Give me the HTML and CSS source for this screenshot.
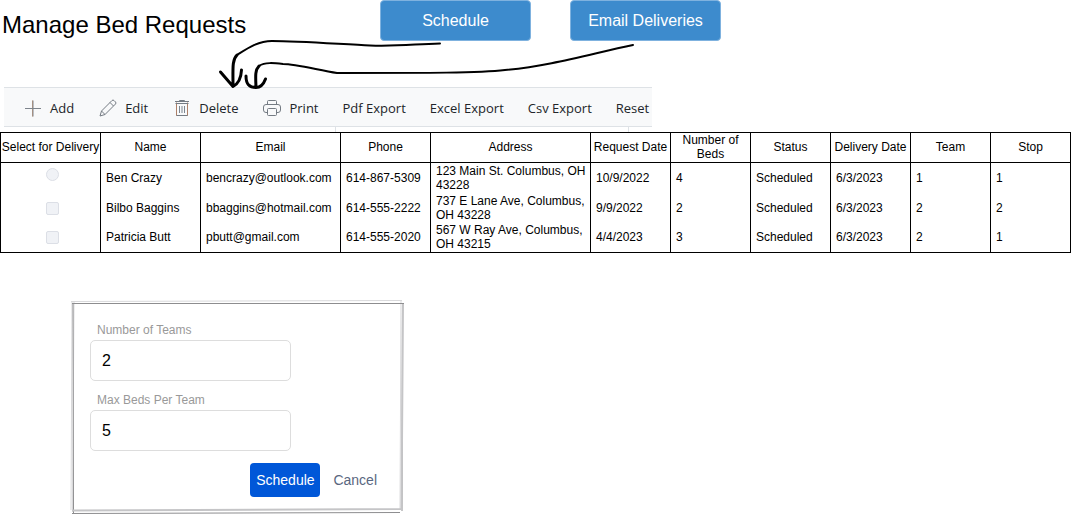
FILE: index.html
```html
<!DOCTYPE html>
<html lang="en">
<head>
<meta charset="utf-8">
<meta name="viewport" content="width=device-width, initial-scale=1">
<title>Manage Bed Requests</title>
<link rel="stylesheet" href="styles.css">
</head>
<body>
<header class="page-header">
  <h1 class="page-title">Manage Bed Requests</h1>
  <div class="header-actions">
    <button class="action-button" type="button">Schedule</button>
    <button class="action-button" type="button">Email Deliveries</button>
  </div>
  <svg class="arrows" width="660" height="92" viewBox="0 0 660 92" aria-hidden="true">
    <g fill="none" stroke="#000" stroke-linecap="round" stroke-linejoin="round">
      <path stroke-width="2" d="M440 43.500C415 44 400 46.500 370 45.500C345 44.500 300 41 272 41C258 41 248 48 237 55"/>
      <path stroke-width="3" d="M237 55C232 60 233 68 233 86M220.500 72L233 86.500C238 84 241 80 241.500 70"/>
      <path stroke-width="2" d="M633 45C590 54 550 66 505 70C480 73 430 73 337 73C318 70 296 64 283 64C274 63 265 62 259 66"/>
      <path stroke-width="3" d="M259 66C255 70 255.500 76 256 87M246 76C246 84 249 87.500 256 87.500C262 87.500 264 83 265.500 79"/>
    </g>
  </svg>
</header>

<div class="toolbar" role="toolbar" aria-label="Request tools">
  <button class="tool tool-with-icon" type="button">
    <svg class="tool-icon" viewBox="0 0 18 18" aria-hidden="true"><path stroke="#c99a78" d="M8.500 1.500V17.500"/><path stroke="#7d848c" d="M1 9.500H17M9 1.500V17.500"/></svg>Add</button>
  <button class="tool tool-with-icon" type="button">
    <svg class="tool-icon" viewBox="0 0 18 18" aria-hidden="true"><path stroke="#747b83" d="M1 17L2.500 12L13 1.500Q14 .5 15 1.500L16.500 3Q17.500 4 16.500 5L6 15.500ZM2.500 12L6 15.500M11 3.500L14.500 7"/></svg>Edit</button>
  <button class="tool tool-with-icon" type="button">
    <svg class="tool-icon" viewBox="0 0 18 18" aria-hidden="true"><path stroke="#ad8068" d="M3.500 3.500V16.500H14.500V3.500"/><path stroke="#747b83" d="M2 2.500H16M6.500 2.500V1.500H11.500V2.500M2.500 4.500H15.500M3.500 16.500H14.500"/><path stroke="#7c8690" d="M6.500 7V14M9 7V14M11.500 7V14"/></svg>Delete</button>
  <button class="tool" type="button">
    <svg class="tool-icon" viewBox="0 0 18 18" aria-hidden="true"><path stroke="#747b83" d="M4.500 5.500V2.500Q4.500 1.500 5.500 1.500H12.500Q13.500 1.500 13.500 2.500V5.500M4 13.500H3Q.5 13.500 .5 11V8Q.5 5.500 3 5.500H15Q17.500 5.500 17.500 8V11Q17.500 13.500 15 13.500H14M4.500 10.500Q4.500 9.500 5.500 9.500H12.500Q13.500 9.500 13.500 10.500V15.500Q13.500 16.500 12.500 16.500H5.500Q4.500 16.500 4.500 15.500Z"/></svg>Print</button>
  <button class="tool" type="button">Pdf Export</button>
  <button class="tool" type="button">Excel Export</button>
  <button class="tool" type="button">Csv Export</button>
  <button class="tool" type="button">Reset</button>
</div>
<div class="grid-edge"><span class="edge-cell"></span><span class="edge-cell edge-cell-next"></span></div>

<table class="requests">
  <colgroup>
    <col class="col-medium"><col class="col-medium"><col class="col-email"><col class="col-phone"><col class="col-address"><col class="col-small"><col class="col-small"><col class="col-small"><col class="col-small"><col class="col-small"><col class="col-small">
  </colgroup>
  <thead>
    <tr><th class="tight-head" scope="col">Select for Delivery</th><th scope="col">Name</th><th scope="col">Email</th><th scope="col">Phone</th><th scope="col">Address</th><th class="tight-head" scope="col">Request Date</th><th scope="col">Number of Beds</th><th scope="col">Status</th><th class="tight-head" scope="col">Delivery Date</th><th scope="col">Team</th><th scope="col">Stop</th></tr>
  </thead>
  <tbody>
    <tr><td class="select-cell"><input class="pick pick-round" type="radio" aria-label="Select Ben Crazy" disabled></td><td>Ben Crazy</td><td>bencrazy@outlook.com</td><td>614-867-5309</td><td class="address">123 Main St. Columbus, OH 43228</td><td>10/9/2022</td><td>4</td><td>Scheduled</td><td>6/3/2023</td><td>1</td><td>1</td></tr>
    <tr><td class="select-cell"><input class="pick" type="checkbox" aria-label="Select Bilbo Baggins" disabled></td><td>Bilbo Baggins</td><td>bbaggins@hotmail.com</td><td>614-555-2222</td><td class="address">737 E Lane Ave, Columbus, OH 43228</td><td>9/9/2022</td><td>2</td><td>Scheduled</td><td>6/3/2023</td><td>2</td><td>2</td></tr>
    <tr><td class="select-cell"><input class="pick" type="checkbox" aria-label="Select Patricia Butt" disabled></td><td>Patricia Butt</td><td>pbutt@gmail.com</td><td>614-555-2020</td><td class="address">567 W Ray Ave, Columbus, OH 43215</td><td>4/4/2023</td><td>3</td><td>Scheduled</td><td>6/3/2023</td><td>2</td><td>1</td></tr>
  </tbody>
</table>

<form class="dialog">
  <svg class="dialog-frame" viewBox="0 0 334 214" preserveAspectRatio="none" aria-hidden="true">
    <g fill="none">
      <path stroke="#d9d9db" stroke-width="1" d="M1 1.500L332 .5M2 2L1 210M4 2L2.500 212M331 0L330 210"/>
      <path stroke="#8d8d8f" stroke-width="1" d="M2 3.500H334M3 3L3.500 213M332.500 3L332 211M2 213.500L330 212.500"/>
      <path stroke="#c5c5c7" stroke-width="2" d="M2 210.500L331 209M333 4L331.500 210"/>
    </g>
  </svg>
  <label class="field-label" for="teams">Number of Teams</label>
  <input class="field" id="teams" type="text" value="2">
  <label class="field-label" for="beds">Max Beds Per Team</label>
  <input class="field" id="beds" type="text" value="5">
  <div class="dialog-actions">
    <button class="submit" type="button">Schedule</button>
    <button class="cancel" type="button">Cancel</button>
  </div>
</form>
</body>
</html>
```
FILE: styles.css
```css
* { box-sizing: border-box; }

body {
  margin: 0;
  background: #fff;
  color: #000;
  font-family: "Liberation Sans", Arial, sans-serif;
  font-size: 12px;
}

button, input { margin: 0; font-family: inherit; }

.page-header {
  position: relative;
  display: flex;
  align-items: flex-start;
  min-height: 87px;
}

.page-title {
  flex: 0 0 380px;
  margin: 0;
  padding: 10px 0 0 2px;
  font-size: 24px;
  font-weight: 400;
  line-height: 30px;
}

.header-actions { display: flex; gap: 39px; }

.action-button {
  width: 151px;
  height: 41px;
  padding: 0;
  border: 1px solid #7fb2df;
  border-radius: 4px;
  background: #3d8bcd;
  color: #fff;
  font-size: 16px;
}

.arrows {
  position: absolute;
  z-index: 1;
  top: 0;
  left: 0;
  pointer-events: none;
}

.toolbar {
  display: flex;
  align-items: center;
  gap: 24px;
  width: 648px;
  max-width: 100%;
  height: 40px;
  margin-left: 4px;
  padding: 2px 0 0 20px;
  overflow: hidden;
  border: solid #dee2e6;
  border-width: 1px 0;
  background: #f8f9fa;
}

.tool {
  display: flex;
  flex: none;
  align-items: center;
  gap: 8px;
  padding: 0;
  border: 0;
  background: none;
  color: #212529;
  font-family: "Open Sans", "Noto Sans", sans-serif;
  font-size: 13px;
  line-height: 20px;
}

.tool-with-icon { padding-right: 1px; }

.tool-icon { width: 18px; height: 18px; fill: none; }

.grid-edge { display: flex; height: 5px; }
.edge-cell { width: 336px; border-right: 1px solid #dee2e6; }
.edge-cell-next { width: 293px; }

.requests {
  width: 100%;
  border: 1px solid #000;
  border-collapse: collapse;
  table-layout: fixed;
}

.col-small { width: 80px; }
.col-phone { width: 90px; }
.col-medium { width: 100px; }
.col-email { width: 140px; }
.col-address { width: 160px; }

.requests th, .requests td {
  height: 30px;
  padding: 0 5px;
  border: solid #000;
  border-width: 0 1px;
  line-height: 14px;
  vertical-align: middle;
}

.requests th {
  padding-bottom: 1px;
  border-width: 1px;
  font-weight: 400;
}

.requests .tight-head { padding: 0 0 1px; white-space: nowrap; }
.requests .select-cell { padding-left: 8px; text-align: center; }
.requests .address { padding-right: 2px; }

.pick {
  display: inline-block;
  width: 13px;
  height: 13px;
  border: 1px solid #dcdfe6;
  border-radius: 2px;
  background: #f0f2f6;
  appearance: none;
  vertical-align: middle;
}

.pick-round { margin-bottom: 6px; border-radius: 50%; }

.dialog {
  position: relative;
  display: flex;
  flex-direction: column;
  width: 334px;
  max-width: 100%;
  margin: 47px 0 0 70px;
  padding: 22px 20px 17px;
}

.dialog-frame {
  position: absolute;
  inset: 0;
  width: 100%;
  height: 100%;
  pointer-events: none;
}

.field-label {
  height: 18px;
  padding-left: 7px;
  color: #999;
  line-height: 16px;
}

.field {
  width: 201px;
  height: 41px;
  margin-bottom: 11px;
  padding: 0 11px;
  border: 1px solid #ddd;
  border-radius: 5px;
  background: #fff;
  color: #000;
  font-size: 16px;
}

.dialog-actions {
  display: flex;
  justify-content: flex-end;
  gap: 13px;
  padding: 1px 7px 0 0;
}

.submit, .cancel {
  height: 34px;
  padding: 0;
  border: 0;
  border-radius: 4px;
  font-size: 14px;
}

.submit {
  width: 70px;
  background: #0057d8;
  color: #fff;
}

.cancel { background: none; color: #596780; }
```
